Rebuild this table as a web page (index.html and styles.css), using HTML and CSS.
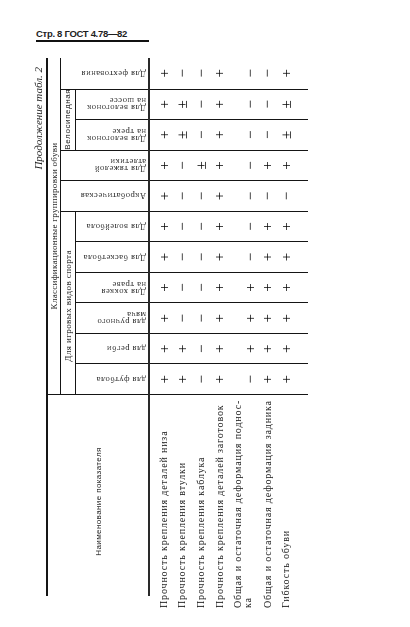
FILE: index.html
```html
<!DOCTYPE html>
<html lang="ru">
<head>
<meta charset="utf-8">
<title>ГОСТ 4.78—82, стр. 8</title>
<link rel="stylesheet" href="styles.css">
</head>
<body>
<div class="page">
  <header class="running-head">Стр. 8 ГОСТ 4.78—82</header>
  <div class="sheet-frame">
    <div class="sheet">
      <div class="caption">Продолжение табл. 2</div>
      <div class="table">
        <div class="thead">
          <div class="h-name">Наименование показателя</div>
          <div class="h-class">Классификационные группировки обуви</div>
          <div class="h-game">Для игровых видов спорта</div>
          <div class="h-col acro"><span>Акробатическая</span></div>
          <div class="h-col heavy"><span>Для тяжелой<br>атлетики</span></div>
          <div class="h-cycle">Велосипедная</div>
          <div class="h-col fence"><span>Для фехтования</span></div>
          <div class="h-col"><span>для футбола</span></div>
          <div class="h-col"><span>для регби</span></div>
          <div class="h-col"><span>для ручного<br>мяча</span></div>
          <div class="h-col"><span>Для хоккея<br>на траве</span></div>
          <div class="h-col"><span>Для баскетбола</span></div>
          <div class="h-col"><span>Для волейбола</span></div>
          <div class="h-col"><span>Для велогонок<br>на треке</span></div>
          <div class="h-col"><span>Для велогонок<br>на шоссе</span></div>
        </div>
        <div class="tbody">
          <div class="labels">
            <p>Прочность крепления деталей низа</p>
            <p>Прочность крепления втулки</p>
            <p>Прочность крепления каблука</p>
            <p>Прочность крепления деталей заготовок</p>
            <p class="two-line">Общая и остаточная деформация поднос-<br>ка</p>
            <p>Общая и остаточная деформация задника</p>
            <p>Гибкость обуви</p>
          </div>
          <div class="col"><span>+</span><span>+</span><span>−</span><span>+</span><span>−</span><span>+</span><span>+</span></div>
          <div class="col"><span>+</span><span>+</span><span>−</span><span>+</span><span>+</span><span>+</span><span>+</span></div>
          <div class="col"><span>+</span><span>−</span><span>−</span><span>+</span><span>+</span><span>+</span><span>+</span></div>
          <div class="col"><span>+</span><span>−</span><span>−</span><span>+</span><span>+</span><span>+</span><span>+</span></div>
          <div class="col"><span>+</span><span>−</span><span>−</span><span>+</span><span>−</span><span>+</span><span>+</span></div>
          <div class="col"><span>+</span><span>−</span><span>−</span><span>+</span><span>−</span><span>+</span><span>+</span></div>
          <div class="col"><span>+</span><span>−</span><span>−</span><span>+</span><span>−</span><span>−</span><span>−</span></div>
          <div class="col"><span>+</span><span>−</span><span>±</span><span>+</span><span>−</span><span>+</span><span>+</span></div>
          <div class="col"><span>+</span><span>±</span><span>−</span><span>+</span><span>−</span><span>−</span><span>±</span></div>
          <div class="col"><span>+</span><span>±</span><span>−</span><span>+</span><span>−</span><span>−</span><span>±</span></div>
          <div class="col"><span>+</span><span>−</span><span>−</span><span>+</span><span>−</span><span>−</span><span>+</span></div>
        </div>
      </div>
    </div>
  </div>
</div>
</body>
</html>
```

FILE: styles.css
```css
* { box-sizing: border-box; }

html, body {
  margin: 0;
  padding: 0;
  background: #ffffff;
}

body {
  font-family: "Liberation Serif", "DejaVu Serif", serif;
  color: #1e1e1e;
}

.page {
  width: 410px;
  height: 627px;
  padding: 28px 0 0 33px;
  overflow: hidden;
}

.running-head {
  margin-left: 3px;
  width: 113px;
  font-family: "Liberation Sans", Arial, sans-serif;
  font-weight: 700;
  font-size: 9.5px;
  letter-spacing: -0.3px;
  line-height: 12px;
  white-space: nowrap;
  border-bottom: 2px solid #111;
}

.sheet-frame {
  margin-top: 16px;
  width: 275px;
  height: 538px;
}

/* the table is laid out in its own (book) orientation and turned a quarter turn */
.sheet {
  width: 538px;
  height: 275px;
  transform-origin: 0 0;
  transform: translateY(538px) rotate(-90deg);
  will-change: transform;
}

.caption {
  height: 13px;
  line-height: 10px;
  font-style: italic;
  font-size: 11px;
  text-align: right;
  padding-right: 9px;
  white-space: nowrap;
}

.table {
  height: 262px;
  display: flex;
  flex-direction: column;
}

.thead {
  display: grid;
  grid-template-columns: 202px repeat(11, 1fr);
  grid-template-rows: 13px 15px 72px;
  border-top: 2px solid #151515;
  border-bottom: 2px solid #2a2a2a;
}

.h-name {
  grid-column: 1;
  grid-row: 1 / 4;
  border-right: 1px solid #151515;
  display: flex;
  align-items: center;
  justify-content: center;
  font-family: "Liberation Sans", Arial, sans-serif;
  font-size: 8px;
  letter-spacing: 0.4px;
  white-space: nowrap;
  padding-right: 12px;
}

.h-class {
  grid-column: 2 / 13;
  grid-row: 1;
  border-bottom: 1px solid #151515;
  text-align: center;
  font-size: 9px;
  line-height: 12px;
  letter-spacing: 0.3px;
  white-space: nowrap;
}

.h-game {
  grid-column: 2 / 8;
  grid-row: 2;
  border-bottom: 1px solid #151515;
  border-right: 1px solid #151515;
  text-align: center;
  font-size: 9px;
  line-height: 14px;
  letter-spacing: 0.4px;
  white-space: nowrap;
  padding-right: 6px;
}

.h-cycle {
  grid-column: 10 / 12;
  grid-row: 2;
  border-bottom: 1px solid #151515;
  border-right: 1px solid #151515;
  text-align: center;
  font-family: "Liberation Sans", Arial, sans-serif;
  font-size: 8px;
  line-height: 14px;
  letter-spacing: 0.6px;
  white-space: nowrap;
}

.h-col {
  border-right: 1px solid #151515;
  display: flex;
  justify-content: center;
  padding: 3px 0 2px;
}

.h-col span {
  writing-mode: vertical-rl;
  transform: rotate(180deg);
  font-size: 8.5px;
  line-height: 7px;
  letter-spacing: 0.5px;
  white-space: nowrap;
  text-align: start;
}

.acro { grid-column: 8; grid-row: 2 / 4; }
.heavy { grid-column: 9; grid-row: 2 / 4; }
.fence { grid-column: 12; grid-row: 2 / 4; border-right: 0; }

.tbody {
  flex: 1;
  display: grid;
  grid-template-columns: 202px repeat(11, 1fr);
}

.labels,
.col {
  display: grid;
  grid-template-rows: 18px 18px 20px 17px 30px 19px 18px;
  align-content: start;
  align-items: center;
  padding-top: 5px;
  border-right: 1px solid #151515;
}

.labels p {
  margin: 0 0 0 -12px;
  font-size: 10px;
  line-height: 12px;
  letter-spacing: 0.85px;
  white-space: nowrap;
}

.labels p.two-line {
  line-height: 10px;
}

.col {
  justify-items: center;
  font-size: 15px;
  line-height: 1;
  color: #000;
}

.col span:nth-child(5) {
  align-self: end;
}

.col:last-child { border-right: 0; }
```
